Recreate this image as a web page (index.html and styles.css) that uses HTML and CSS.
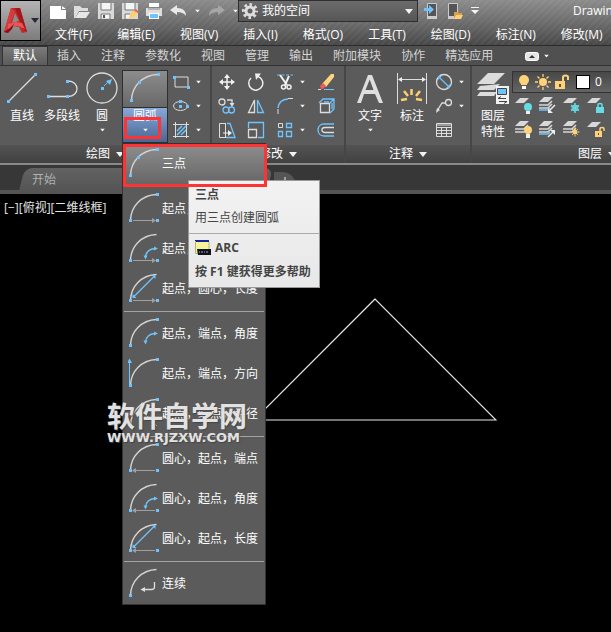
FILE: index.html
```html
<!DOCTYPE html>
<html lang="zh-CN">
<head>
    <meta charset="UTF-8">
    <title>Drawing1.dwg</title>
    <link rel="stylesheet" href="styles.css">
</head>
<body>
<svg class="defs" width="0" height="0" aria-hidden="true">
    <symbol id="arc" viewBox="0 0 32 32">
        <path d="M2.5 27C3 14 13 2 28.5 1.5" fill="none" stroke="#d4d4d4" stroke-width="1.4"/>
    </symbol>
    <symbol id="p-start" viewBox="0 0 32 32"><path d="M1 26h3v3H1z" fill="#6fc4ff"/></symbol>
    <symbol id="p-end" viewBox="0 0 32 32"><path d="M28 0h3v3h-3z" fill="#6fc4ff"/></symbol>
    <symbol id="p-right" viewBox="0 0 32 32"><path d="M28 26h3v3h-3z" fill="#6fc4ff"/></symbol>
    <symbol id="to-right" viewBox="0 0 32 32">
        <path d="M5 27.500h20" stroke="#a0a0a0"/><path d="M24 25l4 2.500l-4 2.500z" fill="#a0a0a0"/>
    </symbol>
    <symbol id="to-left" viewBox="0 0 32 32">
        <path d="M7 27.500h20" stroke="#a0a0a0"/><path d="M8 25l-4 2.500l4 2.500z" fill="#a0a0a0"/>
    </symbol>
    <symbol id="angle" viewBox="0 0 32 32">
        <path d="M17.500 24C18 19 21 16 27 15.500" fill="none" stroke="#6fc4ff" stroke-width="1.300"/>
        <path d="M15.500 22.500h4l-2 4zM26 13.500v4l4-2z" fill="#6fc4ff"/>
    </symbol>
    <symbol id="chord" viewBox="0 0 32 32">
        <path d="M6 23.500L26 3.500" stroke="#6fc4ff" stroke-width="1.300"/>
        <path d="M4.500 25v-4l4 4zM27.500 2v4l-4-4z" fill="#6fc4ff"/>
    </symbol>
    <symbol id="down" viewBox="0 0 8 5"><path d="M0 0h8L4 5z" fill="#f4f4f4"/></symbol>
    <symbol id="sheet" viewBox="0 0 20 20"><path d="M6 2h9l-5 5H1z" fill="#d8d8d8"/></symbol>
    <symbol id="sheets" viewBox="0 0 20 20">
        <path d="M6 1h9l-5 5H1z" fill="#d8d8d8"/>
        <path d="M1 9h9l4-4M1 12h9l4-4" fill="none" stroke="#d8d8d8" stroke-width="1.500"/>
    </symbol>
</svg>

<div class="app">
    <header class="titlebar">
        <button class="app-button" aria-label="应用程序菜单">
            <svg width="26" height="28" viewBox="0 0 26 28">
                <path d="M8 1h9l7 24-5 1-3-6-7-1-4 7-4-1z" fill="#c5282c"/>
                <path d="M8 1L1 25l4-3L12 5z" fill="#d93a3c"/>
                <path d="M12 6l4 8-7 2z" fill="#8b8b8b"/>
                <path d="M12 1h5l7 24-4-3z" fill="#a3181d"/>
                <path d="M5 17l8-2 6 1 3 6-7-3H9l-4 4z" fill="#e65655"/>
                <path d="M1 25l6-4 4-4-2 5-4 4z" fill="#8a1015"/>
            </svg>
            <svg width="8" height="5"><path d="M0 0h8L4 5z" fill="#252b33"/></svg>
        </button>
        <div class="title-main">
            <div class="quick">
                <button aria-label="新建"><svg width="16" height="16"><path d="M0 3h11v4h5v9H0z" fill="#fff"/><path d="M12 3l4 3h-4z" fill="#fff"/></svg></button>
                <button aria-label="打开"><svg width="16" height="16"><path d="M0 3h6l2 2h6v3H5l-4 7H0z" fill="#ddd"/><path d="M5 9h11l-4 6H1z" fill="#e6e6e6"/></svg></button>
                <button aria-label="保存"><svg width="16" height="16"><path d="M0 0h16v16H0z" fill="#d9d9d9"/><path d="M3 0h10v7H3zM4 11h8v4H4z" fill="#f5f5f5"/><path d="M3 0v7h10V0M3 16v-5h9v5" fill="none" stroke="#777"/><path d="M5 12h2v3H5z" fill="#555"/></svg></button>
                <button aria-label="另存为"><svg width="16" height="16"><path d="M0 0h16v16H0z" fill="#d9d9d9"/><path d="M3 0h10v7H3zM4 11h5v4H4z" fill="#f5f5f5"/><path d="M3 0v7h10V0M3 16v-5h5" fill="none" stroke="#777"/><path d="M7 15l1-4 5-4 3 3-5 5z" fill="#ffcf70"/><path d="M12 8l2-2 2 2v2z" fill="#f0605a"/></svg></button>
                <button aria-label="打印"><svg width="16" height="16"><path d="M3 0h10v4H3z" fill="#fff"/><path d="M0 5h16v8H0z" fill="#dedede"/><path d="M2 6h12" stroke="#888"/><path d="M3 10h10v6H3z" fill="#fff"/><path d="M4 11h8v4H4z" fill="#6fc4ff"/></svg></button>
                <button aria-label="放弃"><svg width="17" height="16"><path d="M0 7l7-5v3c6 0 9 3 9 8-2-3-5-4-9-4v3z" fill="#e8e8e8"/></svg></button>
                <button aria-label="放弃列表"><svg width="5" height="4" viewBox="0 0 8 5"><use href="#down"/></svg></button>
                <button aria-label="重做"><svg width="17" height="16"><path d="M17 7l-7-5v3C4 5 1 8 1 13c2-3 5-4 9-4v3z" fill="#a6a6a6"/></svg></button>
                <button aria-label="重做列表"><svg width="5" height="4" viewBox="0 0 8 5"><use href="#down"/></svg></button>
                <label class="workspace">
                    <svg width="16" height="16" viewBox="-8 -8 16 16"><g fill="none" stroke="#ddd"><circle r="4" stroke-width="3"/><circle r="6.500" stroke-width="3" stroke-dasharray="2.600 2.505" stroke-dashoffset="1.300"/></g></svg>
                    <select aria-label="工作空间"><option>我的空间</option></select>
                    <svg width="8" height="5"><use href="#down"/></svg>
                </label>
                <button aria-label="发送到移动设备"><svg width="15" height="17"><path d="M3.500.5h9v15h-9z" fill="#555" stroke="#ccc"/><path d="M3 13h10v3H3z" fill="#ccc"/><path d="M0 5h5V2l5 4.500L5 11V8H0z" fill="#6fc4ff"/></svg></button>
                <button aria-label="从移动设备打开"><svg width="16" height="17"><path d="M1.500.5h9v15h-9z" fill="#555" stroke="#ccc"/><path d="M1 13h6v3H1z" fill="#ccc"/><path d="M7 9h4l1 1h3v3l-2 3H7z" fill="#d9a04c"/><path d="M9 12h7l-2 4H7z" fill="#ffcf7a"/></svg></button>
                <button aria-label="自定义"><svg width="8" height="8"><path d="M0 0h8v1H0zM0 3h8L4 7z" fill="#f4f4f4"/></svg></button>
                <span class="doc-name">Drawing1.dwg</span>
            </div>
            <nav class="menus">
                <a href="#">文件(F)</a>
                <a href="#">编辑(E)</a>
                <a href="#">视图(V)</a>
                <a href="#">插入(I)</a>
                <a href="#">格式(O)</a>
                <a href="#">工具(T)</a>
                <a href="#">绘图(D)</a>
                <a href="#">标注(N)</a>
                <a href="#">修改(M)</a>
            </nav>
        </div>
    </header>

    <nav class="tabs">
        <a href="#" class="current">默认</a>
        <a href="#">插入</a>
        <a href="#">注释</a>
        <a href="#">参数化</a>
        <a href="#">视图</a>
        <a href="#">管理</a>
        <a href="#">输出</a>
        <a href="#">附加模块</a>
        <a href="#">协作</a>
        <a href="#">精选应用</a>
        <button class="collapse" aria-label="最小化功能区">
            <svg width="14" height="9"><rect x=".5" y=".5" width="13" height="8" rx="2" fill="#e4e4e4" stroke="#fff"/><path d="M4 6h6L7 3z" fill="#333"/></svg>
            <svg width="5" height="4" viewBox="0 0 8 5"><use href="#down"/></svg>
        </button>
    </nav>

    <div class="ribbon">
        <section class="panel draw">
            <div class="panel-body">
                <button class="big">
                    <svg width="32" height="32"><path d="M3 29L29 3" stroke="#ddd" stroke-width="1.300"/><path d="M1 28h3v3H1zM28 1h3v3h-3z" fill="#6fc4ff"/></svg>
                    <span>直线</span>
                </button>
                <button class="big">
                    <svg width="32" height="32"><path d="M2 24.500h20M22 9c12 0 12 15.500 0 15.500" fill="none" stroke="#ddd" stroke-width="1.300"/><path d="M1 23h3v3H1zM20 8h3v3h-3zM20 23h3v3h-3z" fill="#6fc4ff"/></svg>
                    <span>多段线</span>
                </button>
                <button class="big">
                    <svg width="32" height="32"><circle cx="16" cy="16" r="15" fill="none" stroke="#ddd" stroke-width="1.300"/><path d="M15 15h3v3h-3zM20 9l6-2-2 6z" fill="#6fc4ff"/><path d="M18 14l5-5" stroke="#6fc4ff"/></svg>
                    <span>圆</span>
                    <svg class="caret" width="5" height="4" viewBox="0 0 8 5"><use href="#down"/></svg>
                </button>
                <div class="arc-split">
                    <button class="arc-main" aria-label="圆弧">
                        <svg width="32" height="32"><use href="#arc"/><use href="#p-start"/><use href="#p-end"/><path d="M9 8h3v3H9z" fill="#6fc4ff"/></svg>
                    </button>
                    <button class="arc-drop">
                        <span>圆弧</span>
                        <svg class="caret" width="5" height="4" viewBox="0 0 8 5"><use href="#down"/></svg>
                    </button>

                    <div class="arc-menu">
                        <button class="picked"><svg width="32" height="32"><use href="#arc"/><use href="#p-start"/><use href="#p-end"/><path d="M9 8h3v3H9z" fill="#6fc4ff"/></svg>三点</button>
                        <hr class="dark">
                        <button><svg width="32" height="32"><use href="#arc"/><use href="#p-start"/><use href="#p-end"/><use href="#p-right"/><use href="#to-right"/></svg>起点，圆心，端点</button>
                        <button><svg width="32" height="32"><use href="#arc"/><use href="#p-start"/><use href="#p-right"/><use href="#to-right"/><use href="#angle"/></svg>起点，圆心，角度</button>
                        <button><svg width="32" height="32"><use href="#arc"/><use href="#p-start"/><use href="#p-right"/><use href="#to-right"/><use href="#chord"/></svg>起点，圆心，长度</button>
                        <hr>
                        <button><svg width="32" height="32"><use href="#arc"/><use href="#p-start"/><use href="#p-end"/><use href="#angle"/></svg>起点，端点，角度</button>
                        <button><svg width="32" height="32"><use href="#arc"/><use href="#p-start"/><use href="#p-end"/><path d="M1.500 26V4" stroke="#6fc4ff"/><path d="M-1 5l2.500-4.500L4 5z" fill="#6fc4ff"/></svg>起点，端点，方向</button>
                        <button><svg width="32" height="32"><use href="#arc"/><use href="#p-start"/><use href="#p-end"/><path d="M13 12l16 16" stroke="#6fc4ff"/><path d="M11 10l5 1-4 4z" fill="#6fc4ff"/></svg>起点，端点，半径</button>
                        <hr>
                        <button><svg width="32" height="32"><use href="#arc"/><use href="#p-start"/><use href="#p-end"/><use href="#p-right"/><use href="#to-left"/></svg>圆心，起点，端点</button>
                        <button><svg width="32" height="32"><use href="#arc"/><use href="#p-start"/><use href="#p-right"/><use href="#to-left"/><use href="#angle"/></svg>圆心，起点，角度</button>
                        <button><svg width="32" height="32"><use href="#arc"/><use href="#p-start"/><use href="#p-right"/><use href="#to-left"/><use href="#chord"/></svg>圆心，起点，长度</button>
                        <hr>
                        <button><svg width="32" height="32"><use href="#arc"/><use href="#p-start"/><path d="M26.500 14v5q0 2.500-3 2.500H15" fill="none" stroke="#ddd" stroke-width="1.300"/><path d="M17 19l-4.500 2.500L17 24z" fill="#ddd"/></svg>连续</button>

                        <div class="tooltip">
                            <div class="tip-top">
                                <strong>三点</strong>
                                <p>用三点创建圆弧</p>
                            </div>
                            <div class="tip-bottom">
                                <div class="tip-cmd">
                                    <svg width="16" height="16"><path d="M0 0h14v14H0z" fill="#f6f29a"/><path d="M0 0h14v2H0z" fill="#12209a"/><path d="M.5 1v12.500H14V2" fill="none" stroke="#b7b46a"/><path d="M2 9h14v6H3z" fill="#10131c"/><path d="M4 12h1m1 0h2m1 0h1m1 0h2" stroke="#aaa"/></svg>
                                    <strong>ARC</strong>
                                </div>
                                <strong>按 F1 键获得更多帮助</strong>
                            </div>
                        </div>
                        <div class="mark mark-item"></div>
                    </div>
                    <div class="mark mark-drop"></div>
                </div>
                <div class="small-grid draw-grid">
                    <button class="small" aria-label="矩形"><svg width="20" height="20"><path d="M4 5h13v10H4z" fill="none" stroke="#ddd"/><path d="M2 4h3v3H2zM16 14h3v3h-3z" fill="#6fc4ff"/></svg><svg width="5" height="4" viewBox="0 0 8 5"><use href="#down"/></svg></button>
                    <button class="small" aria-label="椭圆"><svg width="20" height="20"><ellipse cx="9.500" cy="10" rx="7" ry="4.500" fill="none" stroke="#ddd"/><path d="M8 9h3v3H8zM8 4h3v3H8zM15 9h3v3h-3z" fill="#6fc4ff"/></svg><svg width="5" height="4" viewBox="0 0 8 5"><use href="#down"/></svg></button>
                    <button class="small" aria-label="图案填充"><svg width="20" height="20"><path d="M2 4.500h16M2 16.500h16M4.500 2v16M15.500 2v16" stroke="#ddd"/><path d="M6 11l5-5M6 15l9-9M10 15l5-5" stroke="#6fc4ff" stroke-width="1.500"/></svg><svg width="5" height="4" viewBox="0 0 8 5"><use href="#down"/></svg></button>
                </div>
            </div>
            <button class="panel-title">绘图 <svg width="8" height="5"><use href="#down"/></svg></button>
        </section>

        <section class="panel modify">
            <div class="panel-body">
                <div class="small-grid modify-grid">
                    <button class="small" aria-label="移动"><svg width="20" height="20"><path d="M10 4v12M4 10h12" stroke="#f2f2f2" stroke-width="1.500"/><path d="M10 2l3 4H7zM10 18l3-4H7zM2 10l4-3v6zM18 10l-4-3v6z" fill="#f2f2f2"/></svg></button>
                    <button class="small" aria-label="旋转"><svg width="20" height="20"><path d="M12 4.500A7 7 0 1 1 5 6" fill="none" stroke="#eee" stroke-width="1.500"/><path d="M9 1.500h6L10 8z" fill="#eee"/></svg></button>
                    <button class="small" aria-label="修剪"><svg width="20" height="20"><path d="M2 3h16" stroke="#6fc4ff" stroke-dasharray="3 1.500"/><path d="M5 3l7 10M14 4l-4 9" stroke="#f2f2f2" stroke-width="2"/><circle cx="8.500" cy="15" r="2" fill="none" stroke="#f2f2f2" stroke-width="1.500"/><circle cx="14" cy="15" r="2" fill="none" stroke="#f2f2f2" stroke-width="1.500"/></svg><svg width="5" height="4" viewBox="0 0 8 5"><use href="#down"/></svg></button>
                    <button class="small" aria-label="删除"><svg width="20" height="20"><path d="M6 12L15 2l3 0v3L10 15z" fill="#ffd480"/><path d="M7 11l3 3-3 3H5l-1-3z" fill="#ee5a55"/><path d="M2 17.500h3" stroke="#ddd"/><path d="M8 17.500h10" stroke="#6fc4ff"/></svg></button>

                    <button class="small" aria-label="复制"><svg width="20" height="20"><circle cx="5" cy="6" r="3" fill="none" stroke="#ddd" stroke-width="1.300"/><path d="M10 4h5v4" fill="none" stroke="#ddd" stroke-width="1.300"/><path d="M12.500 7h5L15 11z" fill="#ddd"/><circle cx="9" cy="14" r="3" fill="none" stroke="#6fc4ff" stroke-width="1.300"/><circle cx="14.500" cy="14" r="3" fill="none" stroke="#6fc4ff" stroke-width="1.300"/></svg></button>
                    <button class="small" aria-label="镜像"><svg width="20" height="20"><path d="M8.500 4v12.500h-6z" fill="none" stroke="#ddd" stroke-width="1.300"/><path d="M11.500 4v12.500h6z" fill="none" stroke="#6fc4ff" stroke-width="1.300"/></svg></button>
                    <button class="small" aria-label="圆角"><svg width="20" height="20"><path d="M3 12Q4 3.500 13 3" fill="none" stroke="#6fc4ff" stroke-width="1.500"/><path d="M3 13v5M13 2.500h5" stroke="#ddd"/></svg><svg width="5" height="4" viewBox="0 0 8 5"><use href="#down"/></svg></button>
                    <button class="small" aria-label="分解"><svg width="20" height="20"><path d="M4.500 7.500h9v9h-9z" fill="none" stroke="#ddd" stroke-width="1.300"/><path d="M3 7l4-4h11v10l-4 4M14 7l4-4M8 6h5M16 7v6" fill="none" stroke="#6fc4ff" stroke-width="1.300"/></svg></button>

                    <button class="small" aria-label="拉伸"><svg width="20" height="20"><path d="M9 3.500H2.500v14H9M8.500 3v14" fill="none" stroke="#ddd"/><path d="M10 3.500h3l5 14H9" fill="none" stroke="#6fc4ff" stroke-width="1.300"/><path d="M6 13h6" stroke="#eee"/><path d="M11 10l4 3-4 3z" fill="#eee"/></svg></button>
                    <button class="small" aria-label="缩放"><svg width="20" height="20"><path d="M2.500 8V2.500h15v15H12" fill="none" stroke="#6fc4ff" stroke-width="1.300"/><path d="M2.500 9.500h8v8h-8z" fill="none" stroke="#ddd" stroke-width="1.300"/></svg></button>
                    <button class="small" aria-label="阵列"><svg width="20" height="20"><path d="M3.500 3.500h4v4h-4z" fill="none" stroke="#ddd"/><path d="M11.500 3.500h5v4h-5zM3.500 11.500h4v5h-4zM11.500 11.500h5v5h-5z" fill="none" stroke="#6fc4ff" stroke-width="1.300"/></svg><svg width="5" height="4" viewBox="0 0 8 5"><use href="#down"/></svg></button>
                    <button class="small" aria-label="偏移"><svg width="20" height="20"><path d="M18 4H8C0 4 0 16 8 16h10" fill="none" stroke="#6fc4ff" stroke-width="1.300"/><path d="M18 7.500H9C5 7.500 5 12.500 9 12.500h9" fill="none" stroke="#ddd" stroke-width="1.300"/></svg></button>
                </div>
            </div>
            <button class="panel-title">修改 <svg width="8" height="5"><use href="#down"/></svg></button>
        </section>

        <section class="panel annotate">
            <div class="panel-body">
                <button class="big text-button">
                    <svg width="32" height="32"><path d="M3 31L14 3h4l11 28h-4l-4-9H10l-3 9zM11.500 18h8L15.700 7.500z" fill="#dedede"/></svg>
                    <span>文字</span>
                    <svg class="caret" width="5" height="4" viewBox="0 0 8 5"><use href="#down"/></svg>
                </button>
                <button class="big">
                    <svg width="32" height="32"><path d="M1.500 1v31M30.500 1v31M4 7.500h24" stroke="#ddd"/><path d="M2 7.500L6 5v5zM30 7.500L26 5v5z" fill="#eee"/><path d="M5 28l6-1M8 19l4 5M15.500 17v6M24 19l-4 5M26 28l-6-1" stroke="#ffcf70" stroke-width="2.500"/></svg>
                    <span>标注</span>
                </button>
                <div class="small-grid annotate-grid">
                    <button class="small" aria-label="直径"><svg width="20" height="20"><circle cx="10" cy="10" r="7.500" fill="none" stroke="#ddd" stroke-width="1.300"/><path d="M5 5l10 10" stroke="#6fc4ff" stroke-width="1.300"/><path d="M4 4h4L4 8zM16 16h-4l4-4z" fill="#6fc4ff"/></svg><svg width="5" height="4" viewBox="0 0 8 5"><use href="#down"/></svg></button>
                    <button class="small" aria-label="引线"><svg width="20" height="20"><circle cx="14.500" cy="6.500" r="3" fill="none" stroke="#ddd" stroke-width="1.300"/><path d="M11.500 7H8l-5 8" fill="none" stroke="#ddd" stroke-width="1.300"/><path d="M2 17l1-5 3 2z" fill="#ddd"/></svg><svg width="5" height="4" viewBox="0 0 8 5"><use href="#down"/></svg></button>
                    <button class="small" aria-label="表格"><svg width="20" height="20"><path d="M2.500 3.500h15v13h-15zM3 5h14M3 7.500h14M3 10.500h14M3 13.500h14M7.500 7v10M12.500 7v10" fill="none" stroke="#ddd"/></svg></button>
                </div>
            </div>
            <button class="panel-title">注释 <svg width="8" height="5"><use href="#down"/></svg></button>
        </section>

        <section class="panel layers">
            <div class="panel-body">
                <button class="big">
                    <svg width="32" height="32"><path d="M11 1h17L17 12H0zM3 14l-3 4h17l6-6M3 20l-3 4h17l3-4" fill="#dcdcdc"/><path d="M19 14h13v18H19z" fill="#f2f2f2"/><path d="M20.500 16.500h9v6h-9z" fill="#6fc4ff" stroke="#444"/><path d="M21 26.500h8M22 29.500h8" stroke="#444"/><path d="M21 26.500l3-2M30 29.500l-3 2" stroke="#444"/></svg>
                    <span>图层<br>特性</span>
                </button>
                <div class="layer-tools">
                    <label class="layer-select">
                        <svg width="16" height="16"><circle cx="8" cy="6" r="5" fill="#ffd27a"/><path d="M5 9h6v2H5z" fill="#ffd27a"/><path d="M6 12h4v3H6z" fill="#fff"/></svg>
                        <svg width="16" height="16" viewBox="-8 -8 16 16"><circle r="4" fill="#ffd27a"/><path d="M0-8v3M0 5v3M-8 0h3M5 0h3M-5.500-5.500l2 2M5.500-5.500l-2 2M-5.500 5.500l2-2M5.500 5.500l-2-2" stroke="#ffd27a" stroke-width="1.300"/></svg>
                        <svg width="16" height="16"><path d="M1 7h10v8H1z" fill="#ffd27a"/><path d="M9 7V3q0-1.500 2.500-1.500T14 3v3" fill="none" stroke="#ffd27a" stroke-width="2"/><path d="M5 10h2v3H5z" fill="#555"/></svg>
                        <span class="swatch"></span>
                        <select aria-label="图层"><option>0</option></select>
                    </label>
                    <div class="small-grid layer-grid">
                        <button class="small" aria-label="关"><svg width="20" height="20"><use href="#sheet"/><circle cx="14" cy="11" r="4" fill="#68dce4"/><path d="M12 15h4v3h-4z" fill="#eee"/></svg></button>
                        <button class="small" aria-label="隔离"><svg width="20" height="20"><use href="#sheets"/><path d="M1 14h9l2-2" fill="none" stroke="#6fc4ff" stroke-width="1.500"/><path d="M17 9l-5 5" stroke="#eee" stroke-width="1.500"/><path d="M10 17v-5l5 5z" fill="#eee"/></svg></button>
                        <button class="small" aria-label="冻结"><svg width="20" height="20"><use href="#sheet"/><path d="M13 7v10M9 9.500l8 5M9 14.500l8-5" stroke="#68dce4" stroke-width="1.500"/><circle cx="13" cy="12" r="3" fill="none" stroke="#68dce4"/></svg></button>
                        <button class="small" aria-label="锁定"><svg width="20" height="20"><use href="#sheet"/><path d="M10 11h8v6h-8z" fill="#68dce4"/><path d="M12 11V9q0-1.500 2-1.500T16 9v2" fill="none" stroke="#68dce4" stroke-width="1.500"/></svg></button>
                        <button class="small" aria-label="打开所有图层"><svg width="20" height="20"><use href="#sheets"/><circle cx="14" cy="10" r="4" fill="#ffd27a"/><path d="M12 14h4v4h-4z" fill="#eee"/></svg></button>
                        <button class="small" aria-label="取消隔离"><svg width="20" height="20"><use href="#sheets"/><path d="M1 14h9l2-2" fill="none" stroke="#6fc4ff" stroke-width="1.500"/><path d="M10 17l5-5" stroke="#eee" stroke-width="1.500"/><path d="M17 10v5l-5-5z" fill="#eee"/></svg></button>
                        <button class="small" aria-label="解冻"><svg width="20" height="20"><use href="#sheets"/><circle cx="13" cy="12" r="2.500" fill="#ffd27a"/><path d="M13 7.500v9M8.500 12h9M10 9l6 6M10 15l6-6" stroke="#ffd27a" stroke-dasharray="1.500 1"/></svg></button>
                        <button class="small" aria-label="解锁"><svg width="20" height="20"><use href="#sheet"/><path d="M9 11h7v6H9z" fill="#ffd27a"/><path d="M14 11V9q0-1.500 2-1.500T18 9v2" fill="none" stroke="#ffd27a" stroke-width="1.500"/><path d="M12 13h1v2h-1z" fill="#555"/></svg></button>
                    </div>
                </div>
            </div>
            <button class="panel-title">图层 <svg width="8" height="5"><use href="#down"/></svg></button>
        </section>
    </div>

    <nav class="doc-tabs">
        <a href="#" class="doc-tab">开始</a>
        <button class="new-tab" aria-label="新图形"><svg width="8" height="8"><path d="M4 0v8M0 4h8" stroke="#bbb" stroke-width="1.500"/></svg></button>
    </nav>

    <main class="canvas">
        <span class="view-label">[−][俯视][二维线框]</span>
        <svg class="triangle" width="244" height="124" viewBox="0 0 244 124"><path d="M122 1L1 122h242z" fill="none" stroke="#e8e8e8" stroke-width="1.200"/></svg>
        <div class="watermark">
            <b>软件自学网</b>
            <span>WWW.RJZXW.COM</span>
        </div>
    </main>
</div>
</body>
</html>
```
FILE: styles.css
```css
* {
    margin: 0;
    padding: 0;
    box-sizing: border-box;
}
body {
    background: #000;
    color: #fff;
    font: 12px/16px "Open Sans", "Noto Sans CJK SC", sans-serif;
}
button, select {
    border: 0;
    background: none;
    color: inherit;
    font: inherit;
}
a {
    color: inherit;
    text-decoration: none;
}
svg {
    display: block;
    flex: none;
}
.defs {
    position: absolute;
}
.app {
    display: flex;
    flex-direction: column;
    min-height: 100vh;
    position: relative;
    overflow: hidden;
}

/* title bar */
.titlebar {
    display: flex;
    height: 46px;
    border-bottom: 1px solid #2c2c2c;
    background:
        repeating-linear-gradient(135deg, rgba(255, 255, 255, 0.04) 0 2px, transparent 2px 5px),
        linear-gradient(#8c8c8c, #6c6c6c 50%, #484848);
}
.app-button {
    display: flex;
    align-items: center;
    justify-content: center;
    gap: 2px;
    flex: none;
    width: 41px;
    height: 41px;
    border: 1px solid #000;
    background: linear-gradient(#b4b4b4, #7c7c7c);
}
.title-main {
    flex: 1;
    min-width: 0;
}
.quick {
    display: flex;
    align-items: center;
    gap: 8px;
    height: 22px;
    padding-left: 9px;
    white-space: nowrap;
}
.quick button {
    flex: none;
}
.workspace {
    display: flex;
    align-items: center;
    gap: 4px;
    flex: none;
    width: 180px;
    height: 22px;
    padding: 0 4px 0 3px;
    margin: 0 -2px 0 -8px;
    border: 1px solid #2e2e2e;
    background: linear-gradient(#6c6c6c, #565656);
}
.workspace select {
    flex: 1;
    appearance: none;
}
.doc-name {
    padding-left: 86px;
}
.menus {
    display: flex;
    gap: 25px;
    padding: 5px 0 0 14px;
    white-space: nowrap;
}

/* ribbon tabs */
.tabs {
    display: flex;
    align-items: flex-end;
    height: 20px;
    padding-left: 3px;
    background: #505050;
    border-bottom: 1px solid #333;
    color: #d4d4d4;
    white-space: nowrap;
}
.tabs a {
    padding: 0 10px;
    line-height: 18px;
}
.tabs .current {
    background: linear-gradient(#7c7c7c, #5b5b5b);
    box-shadow: 0 0 0 1px #333;
    color: #fff;
}
.collapse {
    display: flex;
    align-items: center;
    gap: 5px;
    height: 18px;
    margin-left: 22px;
}

/* ribbon panels */
.ribbon {
    display: flex;
    background: #5b5b5b;
    border-bottom: 2px solid #8a8a8a;
}
.panel {
    display: flex;
    flex-direction: column;
    flex: none;
    border-right: 2px solid #464646;
}
.draw { width: 212px; }
.modify { width: 134px; }
.annotate { width: 126px; }
.layers { width: 252px; }
.panel-body {
    display: flex;
    height: 79px;
    padding: 4px 0 0 2px;
}
.panel-title {
    display: flex;
    align-items: center;
    justify-content: center;
    gap: 6px;
    height: 18px;
    background: linear-gradient(#535353, #414141);
}
.big {
    display: flex;
    flex-direction: column;
    align-items: center;
    flex: none;
    width: 40px;
    padding-top: 2px;
}
.big span {
    margin-top: 4px;
    white-space: nowrap;
}
.caret {
    margin-top: 4px;
}
.text-button {
    width: 44px;
}
.layers .big {
    width: 38px;
}
.small {
    display: flex;
    align-items: center;
    gap: 5px;
    height: 24px;
}
.small-grid {
    display: grid;
    align-content: start;
}
.draw-grid {
    margin-left: 3px;
}
.modify-grid {
    grid-template-columns: 29px 29px 41px 29px;
    padding-left: 3px;
}
.annotate-grid {
    margin-left: 2px;
}
.layer-grid {
    grid-template-columns: repeat(4, 24px);
    padding-left: 2px;
}

/* arc split button */
.arc-split {
    position: relative;
    flex: none;
    width: 46px;
    height: 73px;
    border: 1px solid #2f2f2f;
}
.arc-main {
    display: flex;
    justify-content: center;
    width: 100%;
    height: 37px;
    padding-top: 2px;
    background: linear-gradient(#8c8c8c, #686868);
    border-bottom: 1px solid #2f2f2f;
}
.arc-drop {
    display: flex;
    flex-direction: column;
    align-items: center;
    width: 100%;
    height: 34px;
    background: linear-gradient(#88a8d8, #4a6694);
}
.arc-menu {
    position: absolute;
    left: -1px;
    top: 72px;
    z-index: 2;
    width: 144px;
    border: 1px solid #333;
    background: #5b5b5b;
}
.arc-menu button {
    display: flex;
    align-items: center;
    gap: 2px;
    width: 100%;
    height: 40px;
    padding-left: 5px;
    white-space: nowrap;
}
.arc-menu .picked {
    background: linear-gradient(#8e8e8e, #666);
}
.arc-menu hr {
    height: 1px;
    margin: 2px 1px;
    border: 0;
    background: #a4a4a4;
}
.arc-menu .dark {
    background: #4a4a4a;
}
.mark {
    position: absolute;
    z-index: 5;
    border: 3px solid #ff3333;
    pointer-events: none;
}
.mark-drop {
    left: 1px;
    top: 46px;
    width: 37px;
    height: 22px;
}
.mark-item {
    left: 0;
    top: 0;
    width: 144px;
    height: 43px;
}
.tooltip {
    position: absolute;
    left: 65px;
    top: 36px;
    z-index: 4;
    width: 132px;
    border: 1px solid #999;
    background: linear-gradient(#f2f2f2, #e8e8e8);
    color: #444;
    white-space: nowrap;
}
.tip-top {
    padding: 6px 6px 7px;
    border-bottom: 1px solid #aaa;
}
.tip-top p {
    margin-top: 7px;
}
.tip-bottom {
    padding: 6px 6px 7px;
}
.tip-cmd {
    display: flex;
    gap: 4px;
    margin-bottom: 8px;
}

/* layer panel */
.layer-tools {
    padding-top: 1px;
}
.layer-select {
    display: flex;
    align-items: center;
    gap: 3px;
    width: 200px;
    height: 22px;
    padding-left: 3px;
    margin-bottom: 1px;
    border: 1px solid #333;
    background: linear-gradient(#484848, #646464);
}
.layer-select select {
    flex: 1;
    appearance: none;
}
.swatch {
    width: 14px;
    height: 14px;
    margin: 0 2px 0 3px;
    border: 1px solid #000;
    background: #fff;
}

/* file tabs */
.doc-tabs {
    display: flex;
    align-items: flex-end;
    gap: 4px;
    height: 29px;
    padding-left: 22px;
    background: #373737;
    border-bottom: 4px solid #555;
}
.doc-tab {
    position: relative;
    z-index: 0;
    width: 248px;
    height: 22px;
    padding: 4px 10px;
    color: #b0b0b0;
}
.doc-tab::before {
    content: "";
    position: absolute;
    inset: 0;
    z-index: -1;
    border-radius: 8px 8px 0 0;
    background: linear-gradient(#626262, #555);
    transform: skewX(-14deg);
}
.new-tab {
    display: flex;
    align-items: center;
    justify-content: center;
    width: 22px;
    height: 18px;
    border-radius: 0 14px 0 0;
    background: #555;
}

/* drawing area */
.canvas {
    flex: 1;
    position: relative;
    padding: 6px 4px;
    background: #000;
}
.view-label {
    color: #e4e4e4;
}
.triangle {
    position: absolute;
    left: 253px;
    top: 104px;
}
.watermark {
    position: absolute;
    left: 107px;
    top: 208px;
    z-index: 5;
    color: #e2e2e2;
    text-shadow: 1px 1px 1px #444;
    white-space: nowrap;
}
.watermark b {
    display: block;
    font-size: 28px;
    line-height: 28px;
}
.watermark span {
    display: block;
    font: bold 13px/16px "DejaVu Sans", sans-serif;
}
```
